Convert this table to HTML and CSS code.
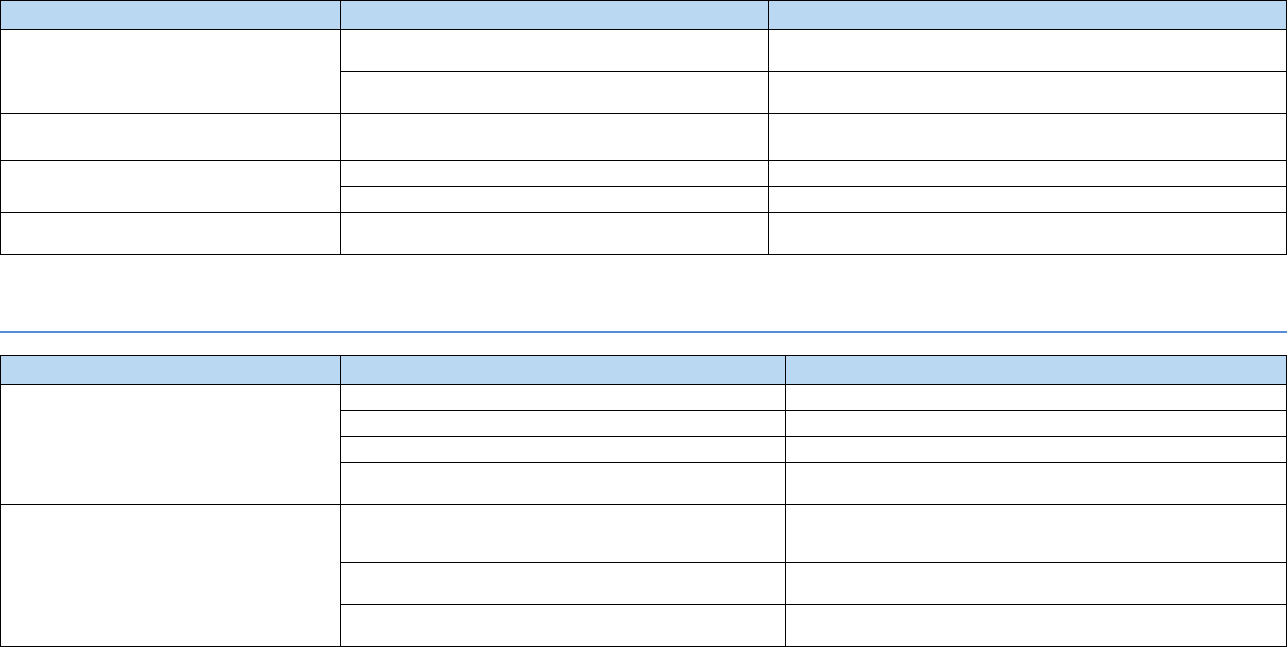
FILE: index.html
```html
<!DOCTYPE html>
<html>
<head>
<meta charset="utf-8">
<link rel="stylesheet" href="styles.css">
</head>
<body>
<div class="grid t1">
  <div class="cell head"></div><div class="cell head"></div><div class="cell head"></div>
  <div class="cell span2"></div><div class="cell"></div><div class="cell"></div>
  <div class="cell"></div><div class="cell"></div>
  <div class="cell"></div><div class="cell"></div><div class="cell"></div>
  <div class="cell span2"></div><div class="cell"></div><div class="cell"></div>
  <div class="cell"></div><div class="cell"></div>
  <div class="cell"></div><div class="cell"></div><div class="cell"></div>
</div>
<div class="rule"></div>
<div class="grid t2">
  <div class="cell head"></div><div class="cell head"></div><div class="cell head"></div>
  <div class="cell span4"></div><div class="cell"></div><div class="cell"></div>
  <div class="cell"></div><div class="cell"></div>
  <div class="cell"></div><div class="cell"></div>
  <div class="cell"></div><div class="cell"></div>
  <div class="cell span3"></div><div class="cell"></div><div class="cell"></div>
  <div class="cell"></div><div class="cell"></div>
  <div class="cell"></div><div class="cell"></div>
</div>
</body>
</html>
```
FILE: styles.css
```css
html, body {
  margin: 0;
  padding: 0;
  background: #ffffff;
  font-family: "Liberation Sans", Arial, sans-serif;
}
.grid {
  display: grid;
  width: 1287px;
  box-sizing: border-box;
  border-top: 1px solid #000;
  border-left: 1px solid #000;
}
.t1 {
  grid-template-columns: 340px 428px 518px;
  grid-template-rows: 29px 42px 42px 47px 26px 26px 42px;
}
.t2 {
  grid-template-columns: 340px 445px 501px;
  grid-template-rows: 29px 26px 26px 26px 42px 58px 42px 42px;
}
.cell {
  box-sizing: border-box;
  border-right: 1px solid #000;
  border-bottom: 1px solid #000;
  background: #fff;
}
.head {
  background: #bbd8f2;
}
.span2 { grid-row: span 2; }
.span3 { grid-row: span 3; }
.span4 { grid-row: span 4; }
.rule {
  height: 2px;
  background: #558ed5;
  margin: 76px 0 22px 0;
  width: 1287px;
}
```
